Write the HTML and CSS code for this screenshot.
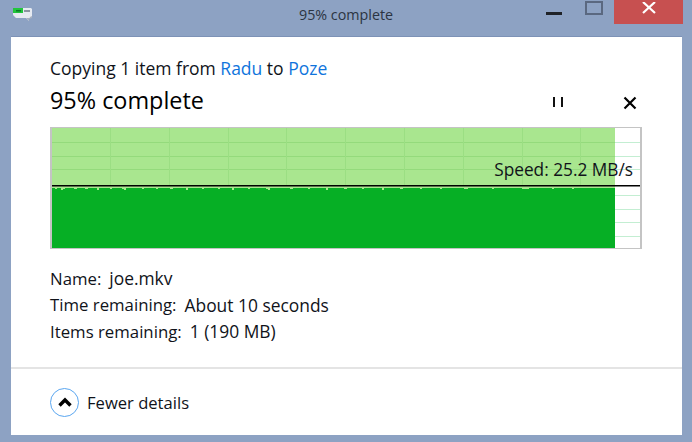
FILE: index.html
```html
<!DOCTYPE html>
<html lang="en">
<head>
<meta charset="utf-8">
<title>95% complete</title>
<link rel="stylesheet" href="styles.css">
</head>
<body>
<div class="frame">
  <header class="titlebar">
    <svg class="app-icon" width="20" height="15" viewBox="0 0 20 15">
      <path d="M0 1h18l1 1v8l-3 1v3l-3-3H3l-3-3z" fill="#e6eaf1"/>
      <path d="M13 11h4v-1l2-1v2l-3 1v2z" fill="#a9b1bf"/>
      <rect x="0" y="1" width="10" height="5" fill="#22c53c"/>
      <rect x="3" y="3" width="5" height="1.500" fill="#0b7a24"/>
      <rect x="11" y="3" width="6" height="2" fill="#8c95a0"/>
    </svg>
    <span class="title">95% complete</span>
    <div class="controls">
      <span class="min"></span>
      <span class="max"></span>
      <span class="close">
        <svg width="14" height="12" viewBox="0 0 14 12"><path d="M1 0l12 11M13 0L1 11" stroke="#fff" stroke-width="2.200" fill="none"/></svg>
      </span>
    </div>
  </header>
  <main class="panel">
    <div class="body">
      <p class="copying">Copying 1 item from <a class="link">Radu</a> to <a class="link">Poze</a></p>
      <div class="headline">
        <h1 class="percent">95% complete</h1>
        <svg class="pause" width="12" height="12" viewBox="0 0 12 12"><path d="M2 1v10M10 1v10" stroke="#111" stroke-width="2" fill="none"/></svg>
        <svg class="stop" width="14" height="14" viewBox="0 0 14 14"><path d="M1.500 1.500l11 11M12.500 1.500l-11 11" stroke="#000" stroke-width="2.200" fill="none"/></svg>
      </div>
      <div class="chart">
        <svg class="graph" width="588" height="120" viewBox="0 0 588 120">
          <rect width="563" height="120" fill="#a9e68f"/>
          <g class="grid-light">
            <path d="M0 14.500H563M0 28.500H563M0 41.500H563"/>
          </g>
          <g class="grid-vertical">
            <path d="M58.500 0V57M117.500 0V57M176.500 0V57M234.500 0V57M293.500 0V57M352.500 0V57M411.500 0V57M470.500 0V57M528.500 0V57"/>
          </g>
          <g class="grid-blank">
            <path d="M563 14.500H588M563 28.500H588M563 41.500H588M563 67.500H588M563 81.500H588M563 94.500H588M563 108.500H588"/>
          </g>
          <path class="area" d="M0 60H3V61H5V60H9V62H11V61H13V60H22V61H25V60H33V61H36V60H45V62H47V60H58V61H60V60H70V61H72V62H74V60H90V61H92V60H104V61H106V60H118V61H121V60H134V62H136V60H150V61H152V60H166V61H168V60H180V62H182V60H196V61H198V60H214V61H216V62H218V60H238V61H241V60H256V61H258V60H274V62H276V60H292V61H295V60H310V61H312V60H330V62H332V60H348V61H351V60H368V61H370V60H388V61H390V60H412V61H416V60H440V61H442V60H470V61H477V60H500V61H502V60H520V61H522V60H563V120H0Z"/>
          <path class="speed-line" d="M0 57.750H588"/>
        </svg>
        <span class="speed">Speed: 25.2 MB/s</span>
      </div>
      <dl class="stats">
        <div class="stat"><dt>Name:</dt><dd>joe.mkv</dd></div>
        <div class="stat"><dt>Time remaining:</dt><dd>About 10 seconds</dd></div>
        <div class="stat"><dt>Items remaining:</dt><dd>1 (190 MB)</dd></div>
      </dl>
    </div>
    <footer class="footer">
      <span class="toggle">
        <svg width="14" height="10" viewBox="0 0 14 10"><path d="M1.500 8.500L7 3l5.500 5.500" stroke="#000" stroke-width="3.400" fill="none"/></svg>
      </span>
      <span class="fewer">Fewer details</span>
    </footer>
  </main>
</div>
</body>
</html>
```
FILE: styles.css
```css
* { box-sizing: border-box; }
html, body { margin: 0; padding: 0; }
body {
  width: 692px;
  height: 442px;
  overflow: hidden;
  background: #8da2c3;
  font-family: "Open Sans", "Noto Sans", sans-serif;
  color: #111;
}
.frame {
  display: flex;
  flex-direction: column;
  height: 442px;
  padding: 0 10px 7px 11px;
}
.titlebar {
  display: grid;
  grid-template-columns: 1fr auto 1fr;
  height: 36px;
  flex: none;
  margin: 0 -10px 0 -11px;
  align-items: start;
}
.app-icon { margin: 7px 0 0 13px; }
.title {
  font-size: 14.300px;
  line-height: 20px;
  color: #2b3442;
  margin-top: 5px;
}
.controls {
  display: flex;
  justify-content: flex-end;
  align-items: flex-start;
  padding-right: 9px;
}
.min {
  width: 16px;
  height: 3px;
  margin-top: 12px;
  background: #1f2227;
}
.max {
  width: 18px;
  height: 14px;
  margin-left: 23px;
  margin-top: 1px;
  border: 2px solid #5a6880;
}
.close {
  width: 69px;
  height: 24px;
  margin-left: 11px;
  background: #c75050;
  display: flex;
  justify-content: center;
  padding-top: 2px;
}
.panel {
  flex: 1;
  background: #fff;
  border-top: 1px solid #7d92b6;
  display: flex;
  flex-direction: column;
  width: 671px;
}
.body {
  flex: 1;
  padding: 20px 39px 0;
}
.copying {
  margin: 0;
  font-size: 17.500px;
  line-height: 23px;
  color: #10131a;
}
.link { color: #0f74dc; }
.headline {
  display: flex;
  align-items: center;
  height: 31px;
  margin-top: 5px;
}
.percent {
  flex: 1;
  margin: 0;
  font-size: 23.400px;
  line-height: 31px;
  font-weight: 400;
  color: #000;
}
.pause { margin: 3px 59px 0 0; }
.stop { margin: 4px 6px 0 0; }
.chart {
  position: relative;
  width: 592px;
  height: 122px;
  margin-top: 11px;
  border: 1px solid #c4c4c4;
  border-width: 1px 2px;
  background: #fff;
}
.graph { display: block; }
.area { fill: #06af25; shape-rendering: crispEdges; }
.speed-line { stroke: #000; stroke-width: 1.500; fill: none; }
.grid-light path { stroke: #94da7c; stroke-width: 1; fill: none; }
.grid-vertical path { stroke: #9bde83; stroke-width: 1; fill: none; }
.grid-blank path { stroke: #c3eed2; stroke-width: 1; fill: none; }
.speed {
  position: absolute;
  right: 7px;
  top: 32px;
  font-size: 17.250px;
  line-height: 20px;
  color: #10131a;
  white-space: nowrap;
}
.stats {
  margin: 16px 0 0;
}
.stat {
  display: flex;
  gap: 8px;
  height: 26.500px;
  align-items: center;
  color: #10131a;
}
.stat dt, .stat dd { margin: 0; }
.stat dt { font-size: 16.800px; }
.stat dd { font-size: 17.400px; }
.footer {
  flex: none;
  height: 68px;
  border-top: 2px solid #e4e4e4;
  display: flex;
  align-items: center;
  padding-left: 39px;
  gap: 8px;
}
.toggle {
  width: 29px;
  height: 29px;
  border: 1.500px solid #5aa6f0;
  border-radius: 50%;
  display: flex;
  align-items: center;
  justify-content: center;
}
.fewer {
  font-size: 16.600px;
  color: #10131a;
}
```
